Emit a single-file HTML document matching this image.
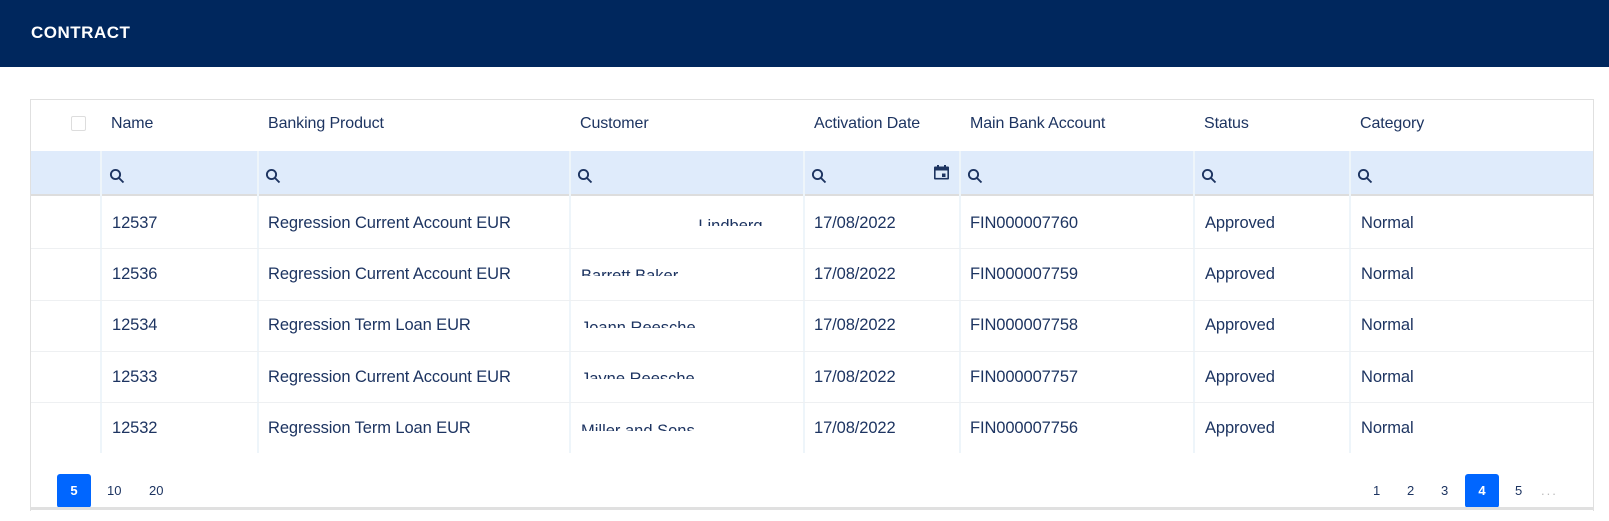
<!DOCTYPE html>
<html><head><meta charset="utf-8"><style>
*{margin:0;padding:0;box-sizing:border-box}
body{width:1609px;height:521px;background:#fff;font-family:"Liberation Sans",sans-serif;color:#1d3461;position:relative;overflow:hidden}
.hdr{position:absolute;left:0;top:0;width:1609px;height:67px;background:#00275d}
.hdr span{position:absolute;left:31px;top:23px;color:#fff;font-weight:bold;font-size:17px;letter-spacing:0.5px}
.tbl{position:absolute;left:30px;top:99px;width:1564px;height:412px;border:1px solid #e0e0e0;border-bottom:none}
.bar{position:absolute;left:30px;top:507px;width:1564px;height:3px;background:#e0e0e0}
.t{position:absolute;font-size:16px;white-space:nowrap;letter-spacing:-0.1px}
.r{font-size:16.5px}
.filter{position:absolute;left:31px;top:151px;width:1562px;height:45px;background:#dfebfb;border-bottom:2px solid #ddd}
.vl{position:absolute;width:2px;background:#eef5fa}
.hl{position:absolute;left:31px;width:1562px;height:1px;background:#eef0f2}
.cb{position:absolute;left:71px;top:116px;width:15px;height:15px;border:1px solid #ddd;border-radius:2px}
.btn{position:absolute;top:474px;height:34px;width:34px;background:#0066ff;color:#fff;border-radius:3px;font-size:13px;font-weight:bold;text-align:center;line-height:34px}
.pg{position:absolute;top:483px;font-size:13px;color:#1d3461}
.cust{position:absolute;font-size:16.5px;white-space:nowrap;overflow:hidden;height:9px;color:#1d3461}
</style></head><body>
<div class="hdr"><span>CONTRACT</span></div>
<div class="tbl"></div>
<div class="filter"></div>
<div class="cb"></div>
<div class="t" style="left:111px;top:115px">Name</div>
<div class="t" style="left:268px;top:115px">Banking Product</div>
<div class="t" style="left:580px;top:115px">Customer</div>
<div class="t" style="left:814px;top:115px">Activation Date</div>
<div class="t" style="left:970px;top:115px">Main Bank Account</div>
<div class="t" style="left:1204px;top:115px">Status</div>
<div class="t" style="left:1360px;top:115px">Category</div>

<div class="vl" style="left:100px;top:151px;height:302px"></div>
<div class="vl" style="left:257px;top:151px;height:302px"></div>
<div class="vl" style="left:569px;top:151px;height:302px"></div>
<div class="vl" style="left:803px;top:151px;height:302px"></div>
<div class="vl" style="left:959px;top:151px;height:302px"></div>
<div class="vl" style="left:1193px;top:151px;height:302px"></div>
<div class="vl" style="left:1349px;top:151px;height:302px"></div>

<svg style="position:absolute;left:0;top:0" width="1609" height="521">
<g fill="none" stroke="#1d3461" stroke-width="1.9">
<g transform="translate(110,169)"><circle cx="5.5" cy="5.5" r="4.6"/><path d="M9 9l4.5 4.5"/></g>
<g transform="translate(266,169)"><circle cx="5.5" cy="5.5" r="4.6"/><path d="M9 9l4.5 4.5"/></g>
<g transform="translate(578,169)"><circle cx="5.5" cy="5.5" r="4.6"/><path d="M9 9l4.5 4.5"/></g>
<g transform="translate(812,169)"><circle cx="5.5" cy="5.5" r="4.6"/><path d="M9 9l4.5 4.5"/></g>
<g transform="translate(968,169)"><circle cx="5.5" cy="5.5" r="4.6"/><path d="M9 9l4.5 4.5"/></g>
<g transform="translate(1202,169)"><circle cx="5.5" cy="5.5" r="4.6"/><path d="M9 9l4.5 4.5"/></g>
<g transform="translate(1358,169)"><circle cx="5.5" cy="5.5" r="4.6"/><path d="M9 9l4.5 4.5"/></g>
</g>
<g transform="translate(934,165)" fill="#1d3461">
<rect x="0" y="1.5" width="15" height="13" rx="1"/>
<rect x="3" y="0" width="2" height="3"/><rect x="10" y="0" width="2" height="3"/>
<rect x="1.6" y="5.5" width="11.8" height="7.4" fill="#dfebfb"/>
<rect x="8" y="8.5" width="3.5" height="3.5"/>
</g>
</svg>

<div class="hl" style="top:248px"></div>
<div class="hl" style="top:300px"></div>
<div class="hl" style="top:351px"></div>
<div class="hl" style="top:402px"></div>

<div class="t r" style="left:112px;top:214px">12537</div>
<div class="t r" style="left:268px;top:214px">Regression Current Account EUR</div>
<div class="cust" style="left:680px;top:217px">&nbsp;&nbsp;&nbsp;&nbsp;Lindberg</div>
<div class="t r" style="left:814px;top:214px">17/08/2022</div>
<div class="t r" style="left:970px;top:214px">FIN000007760</div>
<div class="t r" style="left:1205px;top:214px">Approved</div>
<div class="t r" style="left:1361px;top:214px">Normal</div>

<div class="t r" style="left:112px;top:265px">12536</div>
<div class="t r" style="left:268px;top:265px">Regression Current Account EUR</div>
<div class="cust" style="left:581px;top:267px">Barrett Baker</div>
<div class="t r" style="left:814px;top:265px">17/08/2022</div>
<div class="t r" style="left:970px;top:265px">FIN000007759</div>
<div class="t r" style="left:1205px;top:265px">Approved</div>
<div class="t r" style="left:1361px;top:265px">Normal</div>

<div class="t r" style="left:112px;top:316px">12534</div>
<div class="t r" style="left:268px;top:316px">Regression Term Loan EUR</div>
<div class="cust" style="left:581px;top:319px">Joann Reesche</div>
<div class="t r" style="left:814px;top:316px">17/08/2022</div>
<div class="t r" style="left:970px;top:316px">FIN000007758</div>
<div class="t r" style="left:1205px;top:316px">Approved</div>
<div class="t r" style="left:1361px;top:316px">Normal</div>

<div class="t r" style="left:112px;top:368px">12533</div>
<div class="t r" style="left:268px;top:368px">Regression Current Account EUR</div>
<div class="cust" style="left:581px;top:370px">Jayne Reesche</div>
<div class="t r" style="left:814px;top:368px">17/08/2022</div>
<div class="t r" style="left:970px;top:368px">FIN000007757</div>
<div class="t r" style="left:1205px;top:368px">Approved</div>
<div class="t r" style="left:1361px;top:368px">Normal</div>

<div class="t r" style="left:112px;top:419px">12532</div>
<div class="t r" style="left:268px;top:419px">Regression Term Loan EUR</div>
<div class="cust" style="left:581px;top:422px">Miller and Sons</div>
<div class="t r" style="left:814px;top:419px">17/08/2022</div>
<div class="t r" style="left:970px;top:419px">FIN000007756</div>
<div class="t r" style="left:1205px;top:419px">Approved</div>
<div class="t r" style="left:1361px;top:419px">Normal</div>

<div class="btn" style="left:57px">5</div>
<div class="pg" style="left:107px">10</div>
<div class="pg" style="left:149px">20</div>
<div class="pg" style="left:1373px">1</div>
<div class="pg" style="left:1407px">2</div>
<div class="pg" style="left:1441px">3</div>
<div class="btn" style="left:1465px">4</div>
<div class="pg" style="left:1515px">5</div>
<div class="pg" style="left:1541px;color:#bbb;letter-spacing:2px">...</div>
<div class="bar"></div>
</body></html>
